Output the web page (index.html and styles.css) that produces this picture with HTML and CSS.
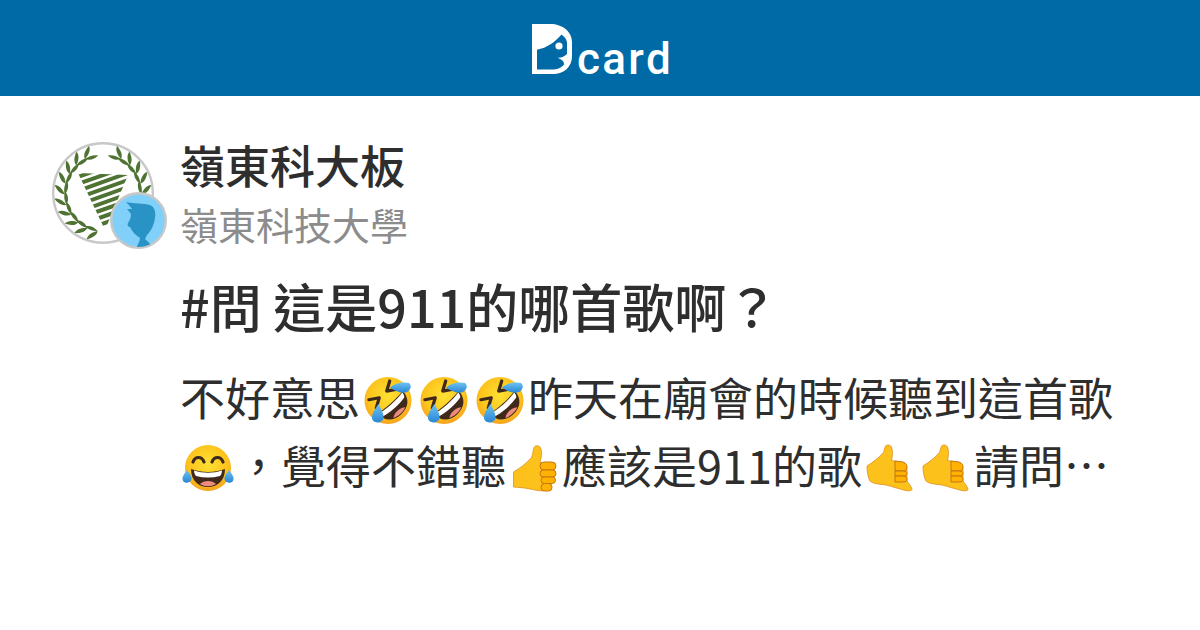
FILE: index.html
```html
<!DOCTYPE html>
<html lang="zh-Hant">
<head>
  <meta charset="UTF-8">
  <title>#問 這是911的哪首歌啊？ | Dcard</title>
  <link rel="stylesheet" href="styles.css">
</head>
<body>
  <!-- Emoji are drawn once here and reused in the post text -->
  <svg class="defs" width="0" height="0" aria-hidden="true">
    <defs>
      <radialGradient id="faceFill" cx="50%" cy="40%" r="62%">
        <stop offset="0" stop-color="#fee133"/>
        <stop offset="0.7" stop-color="#fcc21b"/>
        <stop offset="1" stop-color="#f59e1f"/>
      </radialGradient>
      <linearGradient id="tearFill" x1="0" y1="0" x2="0" y2="1">
        <stop offset="0" stop-color="#6cc3f0"/>
        <stop offset="1" stop-color="#2a86d6"/>
      </linearGradient>

      <symbol id="rofl" viewBox="0 0 56 56">
        <circle cx="28" cy="28.5" r="23.5" fill="url(#faceFill)"/>
        <g transform="rotate(-42 28 28)">
          <path d="M14 15 L23 20.5 L14 26 M42 15 L33 20.5 L42 26" fill="none" stroke="#40291b" stroke-width="3.2" stroke-linejoin="round" stroke-linecap="round"/>
          <path d="M11 31 C20 33 36 33 45 31 C45 42 38 47.5 28 47.5 C18 47.5 11 42 11 31Z" fill="#40291b"/>
          <path d="M12.5 32 C21 34 35 34 43.5 32 C43.5 34 43 35.5 42 37 C33 39 23 39 14 37 C13 35.5 12.5 34 12.5 32Z" fill="#fff"/>
          <path d="M20 45 C24 41.5 32 41.5 36 45 C32 47 24 47 20 45Z" fill="#ed8b80"/>
        </g>
        <path d="M30 15.5 C35 11 43 9.5 49 11 C52 13 51 18 47 20 C41 22 35 19 30 15.5Z" fill="url(#tearFill)"/>
        <path d="M18.5 32 C21 37 24 42 23.5 46 C23 51 15 52 12.5 48 C10.5 43 15 37 18.5 32Z" fill="url(#tearFill)"/>
      </symbol>

      <symbol id="joy" viewBox="0 0 56 56">
        <circle cx="28" cy="28" r="23" fill="url(#faceFill)"/>
        <path d="M13 22 C15 16 22 16 24 22 M32 22 C34 16 41 16 43 22" fill="none" stroke="#40291b" stroke-width="3.2" stroke-linecap="round"/>
        <path d="M11 29 C22 33 34 33 45 29 C45 41 37 47 28 47 C19 47 11 41 11 29Z" fill="#40291b"/>
        <path d="M14 30.5 C23 33.5 33 33.5 42 30.5 C42 33 41 35 40 36 C32 38 24 38 16 36 C15 35 14 33 14 30.5Z" fill="#fff"/>
        <path d="M20 44 C24 40 32 40 36 44 C31 47 25 47 20 44Z" fill="#ed8b80"/>
        <path d="M7 30 C9 33 12 36 11.5 39 C11 43 5 44 3 41 C1 37 5 33 7 30Z" fill="url(#tearFill)"/>
        <path d="M49 30 C51 33 55 37 53 41 C51 44 45 43 44.5 39 C44 36 47 33 49 30Z" fill="url(#tearFill)"/>
      </symbol>

      <symbol id="thumb" viewBox="0 0 56 56">
        <path d="M7.5 32 C14 28 20 24 25.5 17.5 C27 14 27 10 28 7.5 C29 5.5 32 5 34 7 C36 10 36 15 35 18 L34 22 L40 24 L40 50 C36 52 30 50 24 49 C18 47.5 12 47.5 7.5 47Z" fill="#fcc21b" stroke="#dd8f1e" stroke-width="0.8"/>
        <g fill="#ffb300" stroke="#c57616" stroke-width="1">
          <rect x="34" y="22" width="16" height="8" rx="4"/>
          <rect x="34" y="30" width="16" height="7" rx="3.5"/>
          <rect x="35" y="37" width="14.5" height="6.5" rx="3.2"/>
          <rect x="35" y="43.5" width="11" height="7.5" rx="3.5"/>
        </g>
      </symbol>

      <symbol id="callme" viewBox="0 0 56 56">
        <path d="M5 26 C11 22 17 18 21.5 12.5 C22.5 10 22.5 8 23.5 6 C25 4.5 28 4.5 29.5 7 C31 11 30.5 16 29.5 20.5 L38 22 C42 23 45 25 45 30 L45 41 C46.5 43 49 46 50 49 C50 51 47 51 44 50.5 C37 49 30 46.5 24 45 C17 44 11 44 8 41 C6 38 5 31 5 26Z" fill="#fcc21b" stroke="#dd8f1e" stroke-width="0.8"/>
        <g fill="#ffb300" stroke="#c57616" stroke-width="1">
          <path d="M33 21 L41 22 C44 23 45 25 45 27 C45 30 43 31 40 31 L33 30.5Z"/>
          <path d="M33 31 L41 31 C44 31 45 32 45 33.5 C45 35 44 36 41 36 L33 36Z"/>
          <path d="M33 36 L41 36 C44 36 45 38 45 39.5 C45 41 44 42 41 42 L33 42Z"/>
        </g>
      </symbol>

      <g id="leaves">
        <path d="M51 11 C51 7 55 3 61 1 C61 5 57 9 51 11Z"/>
        <path d="M51 11 C56 10 61 11 65 14 C60 16 55 15 51 11Z"/>
      </g>

      <clipPath id="triangle">
        <path d="M26 31 L76 33 L53 88Z"/>
      </clipPath>
      <clipPath id="badgeClip">
        <circle cx="28.5" cy="28.5" r="26.5"/>
      </clipPath>
    </defs>
  </svg>

  <header class="topbar">
    <div class="logo">
      <svg class="logo-mark" width="40" height="50" viewBox="0 0 40 50" aria-hidden="true">
        <path fill="#fff" fill-rule="evenodd" d="M0 0 H18 C31 0 40 8 40 18 V32 C40 43 32 50 21 50 H0Z M5 25.7 V45.5 H21 C29 45.5 35 40 35 32 V19 C35 16 33 13 29.5 10.5 C23 18 15 24 5 25.7Z"/>
        <circle cx="27" cy="22" r="3.6" fill="#fff"/>
        <path fill="#fff" d="M24.5 33.5 C28 34.5 32 33 35 30 V39 L32 41 C32.5 37 29 35 24.5 33.5Z"/>
      </svg>
      <span class="logo-text">card</span>
    </div>
  </header>

  <main class="post">
    <div class="avatar">
      <svg class="school" width="102" height="102" viewBox="0 0 102 102" aria-hidden="true">
        <circle cx="51" cy="51" r="49.8" fill="#fff" stroke="#c8c8c8" stroke-width="2.4"/>
        <g fill="#4f7332" transform="translate(51 51) scale(0.96) translate(-51 -51)">
          <use href="#leaves" transform="rotate(-172 51 51)"/>
          <use href="#leaves" transform="rotate(-156 51 51)"/>
          <use href="#leaves" transform="rotate(-140 51 51)"/>
          <use href="#leaves" transform="rotate(-124 51 51)"/>
          <use href="#leaves" transform="rotate(-108 51 51)"/>
          <use href="#leaves" transform="rotate(-92 51 51)"/>
          <use href="#leaves" transform="rotate(-76 51 51)"/>
          <use href="#leaves" transform="rotate(-60 51 51)"/>
          <use href="#leaves" transform="rotate(-44 51 51)"/>
          <use href="#leaves" transform="rotate(-28 51 51)"/>
          <g transform="translate(102 0) scale(-1 1)">
            <use href="#leaves" transform="rotate(-92 51 51)"/>
            <use href="#leaves" transform="rotate(-76 51 51)"/>
            <use href="#leaves" transform="rotate(-60 51 51)"/>
            <use href="#leaves" transform="rotate(-44 51 51)"/>
            <use href="#leaves" transform="rotate(-28 51 51)"/>
          </g>
        </g>
        <g clip-path="url(#triangle)" stroke="#4f7332" stroke-width="4" fill="none">
          <path d="M20 37 L80 16"/>
          <path d="M20 44 L80 23"/>
          <path d="M20 51 L90 26"/>
          <path d="M20 58 L90 33"/>
          <path d="M20 65 L90 40"/>
          <path d="M20 72 L90 47"/>
          <path d="M30 75 L90 54"/>
          <path d="M30 82 L90 61"/>
          <path d="M30 89 L90 68"/>
        </g>
      </svg>
      <div class="badge">
        <svg width="57" height="57" viewBox="0 0 57 57" aria-hidden="true">
          <circle cx="28.5" cy="28.5" r="27.3" fill="#81d0f9" stroke="#c8c8c8" stroke-width="2.4"/>
          <path clip-path="url(#badgeClip)" fill="#2a93c6" d="M16 10 C24 12 34 11 40 13 C45 15 46 21 45 26 C44 33 41 39 37 43 L35 47 C38 50 41 52 43 57 H26 C27 53 30 50 30 46 C25 43 22 39 20 35 C18 35 17 33 18 31 C20 28 21 25 21 22 L17 17 L22 17 C20 14 18 12 16 10Z"/>
        </svg>
      </div>
    </div>

    <div class="content">
      <h2 class="forum">嶺東科大板</h2>
      <p class="school-name">嶺東科技大學</p>
      <h1 class="title">#問 這是911的哪首歌啊？</h1>
      <p class="excerpt">不好意思<svg class="emoji"><use href="#rofl"/></svg><svg class="emoji"><use href="#rofl"/></svg><svg class="emoji"><use href="#rofl"/></svg>昨天在廟會的時候聽到這首歌<br><svg class="emoji"><use href="#joy"/></svg>，覺得不錯聽<svg class="emoji"><use href="#thumb"/></svg>應該是911的歌<svg class="emoji"><use href="#callme"/></svg><svg class="emoji"><use href="#callme"/></svg>請問…</p>
    </div>
  </main>
</body>
</html>
```

FILE: styles.css
```css
* { box-sizing: border-box; }
html, body { margin: 0; padding: 0; }
body { width: 1200px; height: 630px; overflow: hidden; background: #fff; color: #2e2e2e; font-family: "Noto Sans CJK TC", "Noto Sans", sans-serif; }
.defs { position: absolute; }

.topbar { height: 96px; background: #006aa6; display: flex; align-items: center; justify-content: center; }
.logo { display: flex; align-items: flex-end; height: 50px; margin: 2px 0 0 5px; }
.logo-mark { display: block; margin-right: 5px; }
.logo-text { font-family: Roboto, sans-serif; font-weight: 500; font-size: 44px; line-height: 30px; color: #fff; letter-spacing: 2.4px; }

.post { display: flex; padding: 46px 0 0 52px; }
.avatar { position: relative; width: 102px; height: 102px; flex: none; margin-right: 26px; }
.school { display: block; }
.badge { position: absolute; left: 58px; top: 50px; width: 57px; height: 57px; }
.badge svg { display: block; }

.content { width: 960px; }
.forum { margin: -7px 0 0; font-size: 45px; line-height: 60px; font-weight: 500; color: #2e2e2e; }
.school-name { margin: 0; font-size: 38px; line-height: 58px; color: #8c8c8c; }
.title { margin: 23px 0 0; font-size: 52px; line-height: 60px; font-weight: 500; color: #2e2e2e; }
.excerpt { margin: 27px 0 0; font-size: 45px; line-height: 68px; white-space: nowrap; color: #2e2e2e; }
.emoji { width: 56px; height: 56px; vertical-align: -12px; }
```
